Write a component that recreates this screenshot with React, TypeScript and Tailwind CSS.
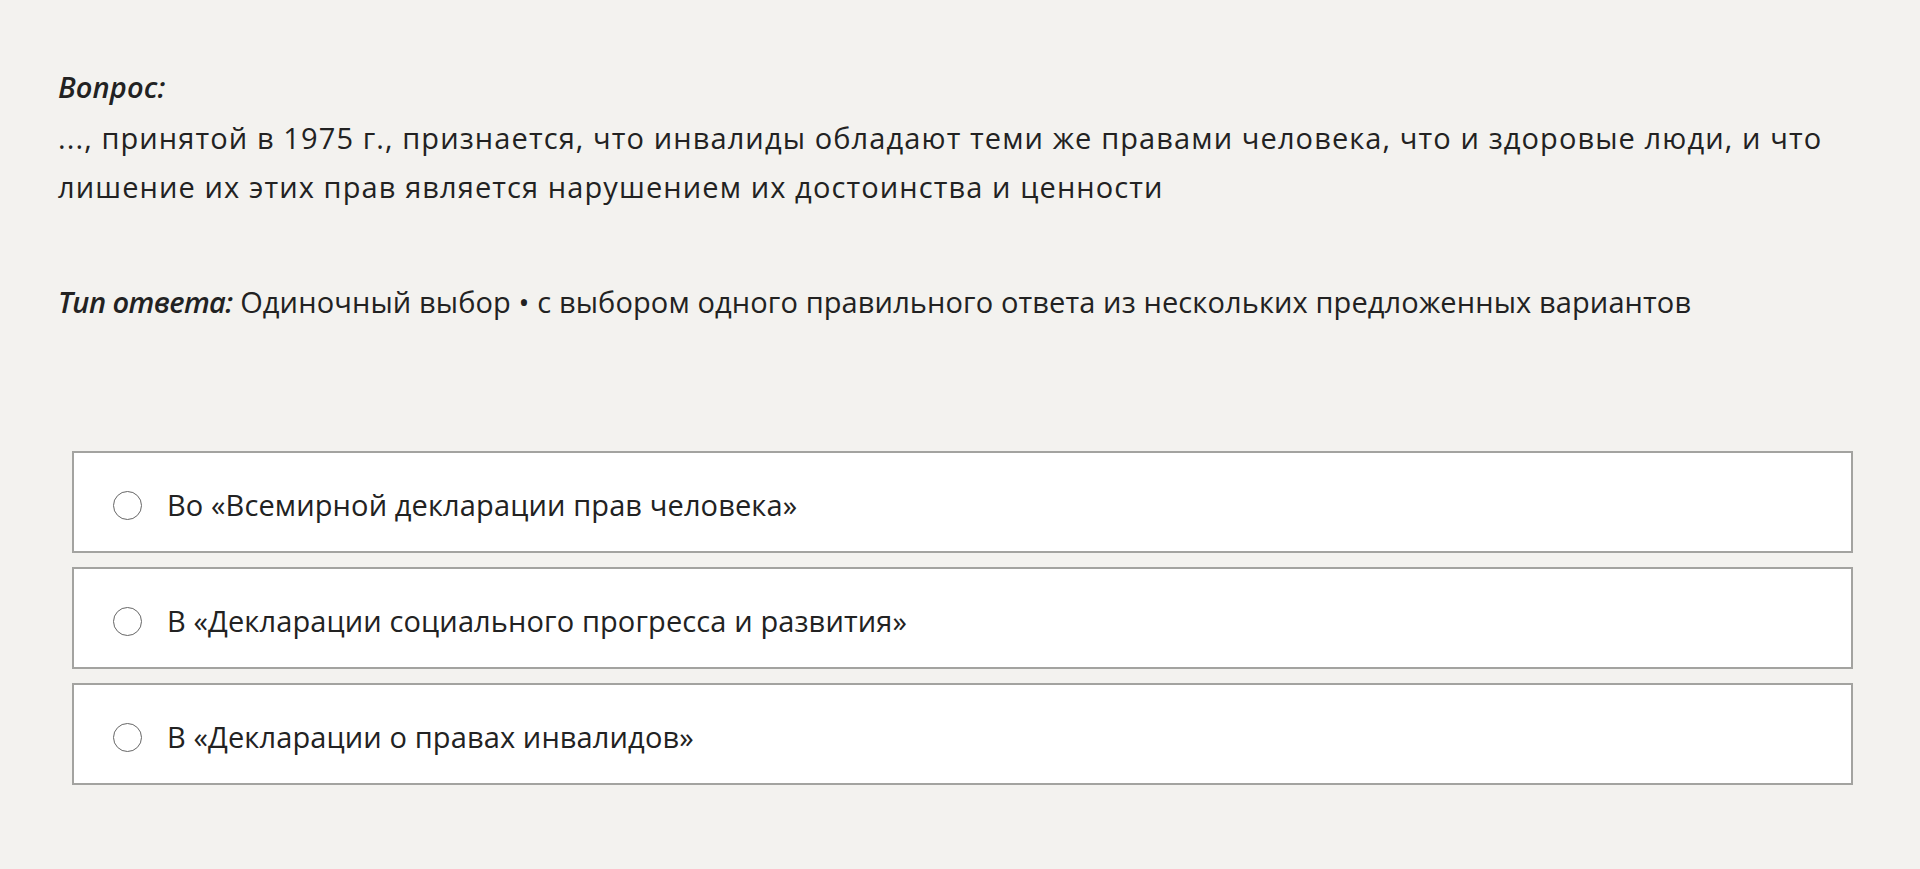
const options = [
  "Во «Всемирной декларации прав человека»",
  "В «Декларации социального прогресса и развития»",
  "В «Декларации о правах инвалидов»",
];

export default function App() {
  return (
    <div
      className="min-h-screen bg-[#f3f2ef] text-[#222222] pl-[58px] pr-[67px] pt-[62px] pb-10"
      style={{ fontFamily: '"Open Sans", "Noto Sans", sans-serif' }}
    >
      <div className="text-[29px] leading-[49px] tracking-[0.004em]">
        <div className="font-semibold italic mb-[2px]">Вопрос:</div>
        <p className="tracking-[0.038em]">
          ..., принятой в 1975 г., признается, что инвалиды обладают теми же правами человека, что и здоровые люди, и что
          <br />
          лишение их этих прав является нарушением их достоинства и ценности
        </p>
        <p className="mt-[66px]">
          <span className="font-semibold italic tracking-[-0.02em]">Тип ответа:</span> Одиночный выбор • с выбором одного правильного ответа из нескольких предложенных вариантов
        </p>
      </div>

      <div className="mt-[125px] ml-[14px] flex flex-col gap-[14px]">
        {options.map((o) => (
          <label
            key={o}
            className="h-[102px] bg-white border-2 border-[#a3a3a0] flex items-center pl-[39px] pt-[6px] cursor-pointer"
          >
            <span className="w-[29px] h-[29px] rounded-full border-[1.5px] border-[#666666] bg-white shrink-0" />
            <span className="ml-[25px] text-[29px] tracking-[0.004em]">{o}</span>
          </label>
        ))}
      </div>
    </div>
  );
}
